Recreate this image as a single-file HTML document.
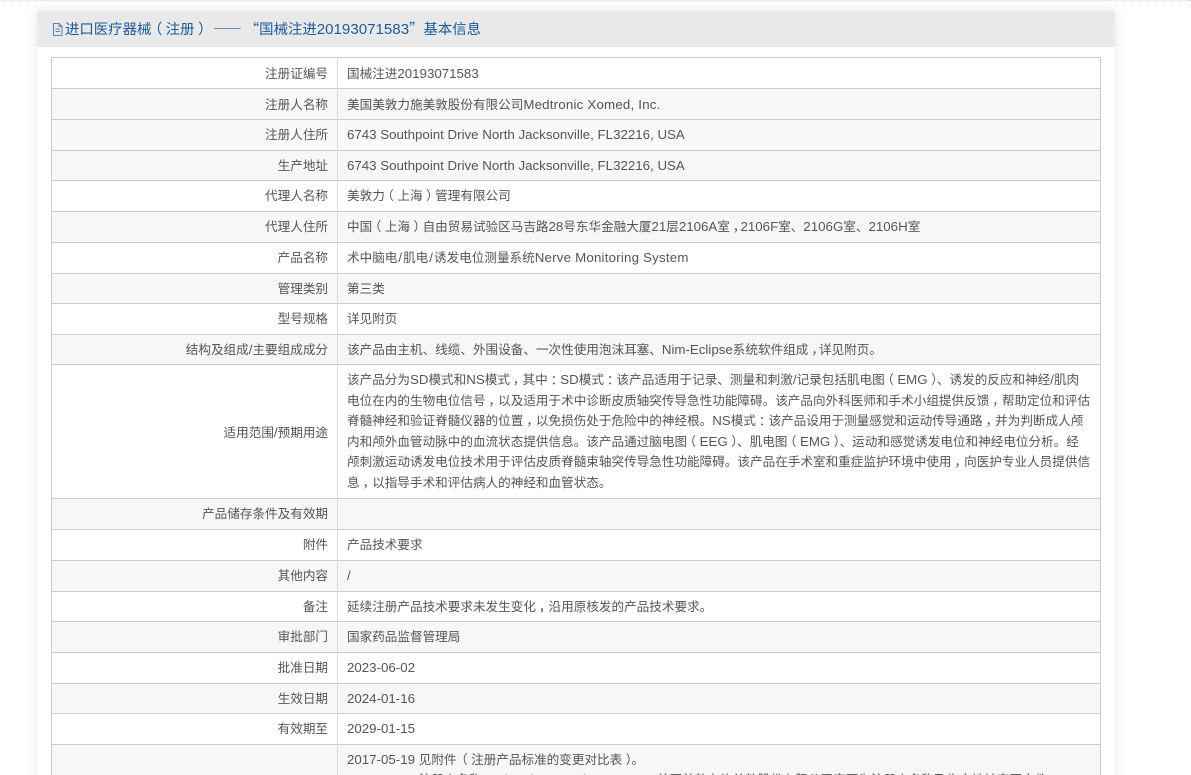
<!DOCTYPE html>
<html lang="zh"><head><meta charset="utf-8"><title>基本信息</title>
<style>
html,body{margin:0;padding:0;width:1191px;height:775px;overflow:hidden;background:#fff;position:relative;font-family:"Noto Sans CJK SC","Liberation Sans",sans-serif;font-size:12.6px;color:#555}
i{font-family:"Liberation Sans",sans-serif;font-style:normal;font-size:13.3px;line-height:1}
i.w{letter-spacing:.2px}
i.s{margin:0 1px}
b{font-weight:normal;position:relative}
b.o{left:-3.5px}
b.e{left:3.5px}
b.f{left:3.5px;margin-right:3px}
b.c{left:3px}
b.n{left:3px;margin-right:-2px}
#dots{position:absolute;left:0;top:0;width:1191px;height:0;border-top:1px dotted #ddd}
#panel{position:absolute;left:37px;top:11px;width:1078px;height:800px;background:#fff;box-shadow:0 0 12px rgba(0,0,0,.10)}
#head{position:absolute;left:37px;top:11px;width:1078px;height:36px;background:#e9e9e9}
#title{position:absolute;left:65px;top:11px;height:36px;line-height:36px;color:#1d5a9c;white-space:nowrap;font-size:14.4px}
#title i{font-size:15.1px}
#icon{position:absolute;left:52px;top:23px}
.r{position:absolute;left:51px;width:1050px;border-top:1px solid #ccc;box-sizing:border-box}
.r.a{background:#f7f7f7}
.l{position:absolute;left:0;width:277px;text-align:right;top:0;white-space:nowrap}
.v{position:absolute;left:296px;top:0;white-space:nowrap}
#vl,#hl,#vr{position:absolute;background:#ccc}
</style></head><body>
<div id="dots"></div>
<div id="panel"></div>
<div id="head"></div>
<svg id="icon" width="11" height="13" viewBox="0 0 11 13" fill="none" stroke="#5a84b4" stroke-width="1"><path d="M1.5 .5H7L10 3.5V12.5H1.5ZM7 .5V3.5H10M3.5 6H8M3.5 8.5H8"/></svg>
<div id="title">进口医疗器械<b class="o">（</b>注册<b class="e">）</b><span style="margin-left:4px">——</span><span style="margin-left:3px">“</span>国械注进<i>20193071583</i>”基本信息</div>

<div class="r" style="top:57px;height:31px;line-height:29px"><div class="l">注册证编号</div><div class="v">国械注进<i>20193071583</i></div></div>
<div class="r a" style="top:88px;height:31px;line-height:29px"><div class="l">注册人名称</div><div class="v">美国美敦力施美敦股份有限公司<i class="w">Medtronic Xomed, Inc.</i></div></div>
<div class="r" style="top:119px;height:31px;line-height:27px;background:#f7f9fa"><div class="l">注册人住所</div><div class="v"><i>6743 Southpoint Drive North Jacksonville, FL32216, USA</i></div></div>
<div class="r a" style="top:150px;height:30px;line-height:27px"><div class="l">生产地址</div><div class="v"><i>6743 Southpoint Drive North Jacksonville, FL32216, USA</i></div></div>
<div class="r" style="top:180px;height:31px;line-height:28px"><div class="l">代理人名称</div><div class="v">美敦力<b class="o">（</b>上海<b class="e">）</b>管理有限公司</div></div>
<div class="r a" style="top:211px;height:31px;line-height:27px"><div class="l">代理人住所</div><div class="v">中国<b class="o">（</b>上海<b class="e">）</b>自由贸易试验区马吉路<i>28</i>号东华金融大厦<i>21</i>层<i>2106A</i>室<b class="n">，</b><i>2106F</i>室、<i>2106G</i>室、<i>2106H</i>室</div></div>
<div class="r" style="top:242px;height:31px;line-height:27px"><div class="l">产品名称</div><div class="v">术中脑电<i class="s">/</i>肌电<i class="s">/</i>诱发电位测量系统<i class="w">Nerve Monitoring System</i></div></div>
<div class="r a" style="top:273px;height:30px;line-height:27px"><div class="l">管理类别</div><div class="v">第三类</div></div>
<div class="r" style="top:303px;height:31px;line-height:27px"><div class="l">型号规格</div><div class="v">详见附页</div></div>
<div class="r a" style="top:334px;height:30px;line-height:27px"><div class="l">结构及组成<i>/</i>主要组成成分</div><div class="v">该产品由主机、线缆、外围设备、一次性使用泡沫耳塞、<i>Nim-Eclipse</i>系统软件组成<b class="n">，</b>详见附页。</div></div>
<div class="r" style="top:364px;height:134px"><div class="l" style="top:52px;line-height:30px">适用范围<i>/</i>预期用途</div>
<div class="v" style="top:4px;line-height:20.6px;width:746px">该产品分为<i>SD</i>模式和<i>NS</i>模式<b class="c">，</b>其中<b class="c">：</b><i>SD</i>模式<b class="c">：</b>该产品适用于记录、测量和刺激<i>/</i>记录包括肌电图<b class="o">（</b><i>EMG</i><b class="f">）</b>、诱发的反应和神经<i>/</i>肌肉<br>电位在内的生物电位信号<b class="c">，</b>以及适用于术中诊断皮质轴突传导急性功能障碍。该产品向外科医师和手术小组提供反馈<b class="c">，</b>帮助定位和评估<br>脊髓神经和验证脊髓仪器的位置<b class="c">，</b>以免损伤处于危险中的神经根。<i>NS</i>模式<b class="c">：</b>该产品设用于测量感觉和运动传导通路<b class="c">，</b>并为判断成人颅<br>内和颅外血管动脉中的血流状态提供信息。该产品通过脑电图<b class="o">（</b><i>EEG</i><b class="f">）</b>、肌电图<b class="o">（</b><i>EMG</i><b class="f">）</b>、运动和感觉诱发电位和神经电位分析。经<br>颅刺激运动诱发电位技术用于评估皮质脊髓束轴突传导急性功能障碍。该产品在手术室和重症监护环境中使用<b class="c">，</b>向医护专业人员提供信<br>息<b class="c">，</b>以指导手术和评估病人的神经和血管状态。</div></div>
<div class="r a" style="top:498px;height:31px;line-height:28px"><div class="l">产品储存条件及有效期</div></div>
<div class="r" style="top:529px;height:31px;line-height:28px"><div class="l">附件</div><div class="v">产品技术要求</div></div>
<div class="r a" style="top:560px;height:31px;line-height:27px"><div class="l">其他内容</div><div class="v"><i>/</i></div></div>
<div class="r" style="top:591px;height:30px;line-height:27px"><div class="l">备注</div><div class="v">延续注册产品技术要求未发生变化<b class="c">，</b>沿用原核发的产品技术要求。</div></div>
<div class="r a" style="top:621px;height:31px;line-height:28px"><div class="l">审批部门</div><div class="v">国家药品监督管理局</div></div>
<div class="r" style="top:652px;height:31px;line-height:27px"><div class="l">批准日期</div><div class="v"><i>2023-06-02</i></div></div>
<div class="r a" style="top:683px;height:30px;line-height:27px"><div class="l">生效日期</div><div class="v"><i>2024-01-16</i></div></div>
<div class="r" style="top:713px;height:31px;line-height:28px"><div class="l">有效期至</div><div class="v"><i>2029-01-15</i></div></div>
<div class="r a" style="top:744px;height:60px"><div class="v" style="top:4px;line-height:19.6px"><i>2017-05-19 </i>见附件<span style="margin-left:2px"></span><b class="o">（</b>注册产品标准的变更对比表<b class="f">）</b>。<br><i>2020-06-15 </i>注册人名称<i>Medtronic Xomed, Inc. 2106A</i>美国美敦力施美敦股份有限公司变更为注册人名称及生产地址变更文件。</div></div>

<div id="vl" style="left:51px;top:57px;width:1px;height:718px"></div>
<div id="vl2" style="position:absolute;background:#ddd;left:337px;top:58px;width:1px;height:717px"></div>
<div id="vr" style="left:1100px;top:57px;width:1px;height:718px"></div>
</body></html>
